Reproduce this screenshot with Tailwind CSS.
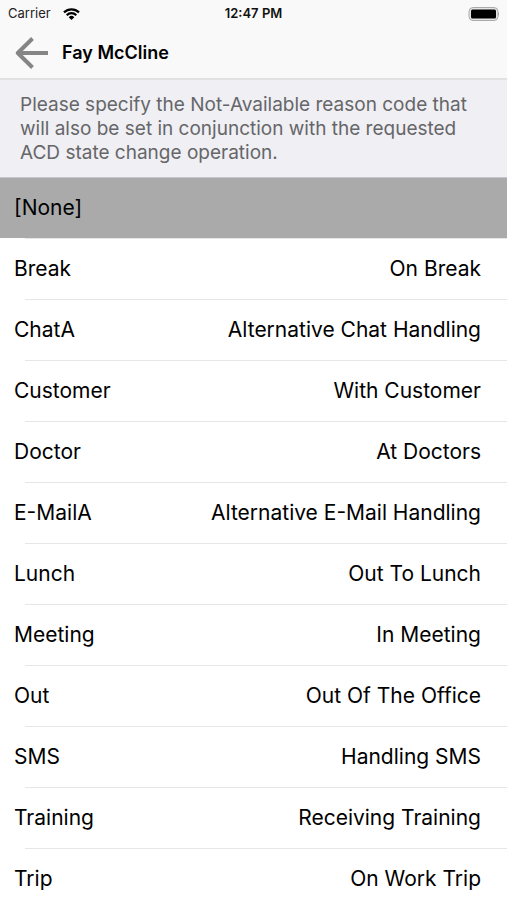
<!DOCTYPE html>
<html lang="en">
<head>
    <meta charset="UTF-8">
    <meta name="viewport" content="width=device-width, initial-scale=1.0">
    <title>Fay McCline</title>
    <script src="https://cdn.jsdelivr.net/npm/@tailwindcss/browser@4"></script>
</head>
<body class="h-screen flex flex-col overflow-hidden bg-white text-black font-[Inter,'Liberation_Sans',sans-serif]">
    <!-- Header -->
    <header class="shrink-0 bg-[#f9f9f9] border-b-2 border-[#e2e2e4]">
        <div class="grid grid-cols-3 items-center h-7 px-2 text-[13px]">
            <div class="flex items-center gap-3 text-[#222]">
                <span>Carrier</span>
                <svg class="w-[17px] h-3" viewBox="0 0 17 12" fill="none" stroke="#000" stroke-width="2.2" aria-label="Wi-Fi">
                    <path d="M1 4.4a10.6 10.6 0 0 1 15 0M3.7 7.2a6.8 6.8 0 0 1 9.6 0"/>
                    <path d="M8.5 12 5.7 9.2a4 4 0 0 1 5.6 0z" fill="#000" stroke="none"/>
                </svg>
            </div>
            <span class="text-center font-semibold text-[#111]">12:47 PM</span>
            <svg class="w-8 h-[14px] justify-self-end" viewBox="0 0 32 14" aria-label="Battery">
                <rect x="2" y="0.5" width="29" height="13" rx="4" fill="#e4e4e4" stroke="#aaa"/>
                <rect x="4" y="2.5" width="25" height="9" rx="1.5" fill="#000"/>
                <path d="M31.3 5v4c1-.7 1-3.3 0-4z" fill="#999"/>
            </svg>
        </div>
        <div class="flex items-center h-[50px] px-[15px] gap-[14px]">
            <button type="button" aria-label="Back">
                <svg class="w-[33px] h-8" viewBox="0 0 33 32" fill="none" stroke="#858585" stroke-width="4" stroke-linejoin="round">
                    <path d="M17.5 1.5 2.8 16l14.7 14.5"/>
                    <path d="M3 16h30"/>
                </svg>
            </button>
            <h1 class="text-lg font-semibold">Fay McCline</h1>
        </div>
    </header>

    <p class="shrink-0 px-5 pt-[13px] pb-3 bg-[#efeff4] border-b border-[#c8c8cc] text-[19px] leading-6 text-[#666668]">
        Please specify the Not-Available reason code that will also be set in conjunction with the requested ACD state change operation.
    </p>

    <!-- Reason codes -->
    <ul id="reasonList" class="flex-1 overflow-y-auto [scrollbar-width:none] text-[21px]"></ul>

    <script>
        const reasons = [
            ['[None]', ''],
            ['Break', 'On Break'],
            ['ChatA', 'Alternative Chat Handling'],
            ['Customer', 'With Customer'],
            ['Doctor', 'At Doctors'],
            ['E-MailA', 'Alternative E-Mail Handling'],
            ['Lunch', 'Out To Lunch'],
            ['Meeting', 'In Meeting'],
            ['Out', 'Out Of The Office'],
            ['SMS', 'Handling SMS'],
            ['Training', 'Receiving Training'],
            ['Trip', 'On Work Trip'],
        ];
        const reasonList = document.getElementById('reasonList');

        function showReasons(selected) {
            reasonList.innerHTML = reasons.map(([code, label], i) => `
                <li>
                    <button type="button" data-index="${i}" class="flex w-full h-[60px] items-center justify-between pl-[14px] pr-[26px] ${i === selected ? 'bg-[#aaaaaa]' : 'bg-white'}">
                        <span>${code}</span>
                        <span>${label}</span>
                    </button>
                    <div class="ml-[25px] h-px bg-[#e6e6e8]"></div>
                </li>`).join('');
        }

        reasonList.addEventListener('click', (e) => {
            const btn = e.target.closest('button');
            if (btn) showReasons(Number(btn.dataset.index));
        });

        showReasons(0);
    </script>
</body>
</html>
